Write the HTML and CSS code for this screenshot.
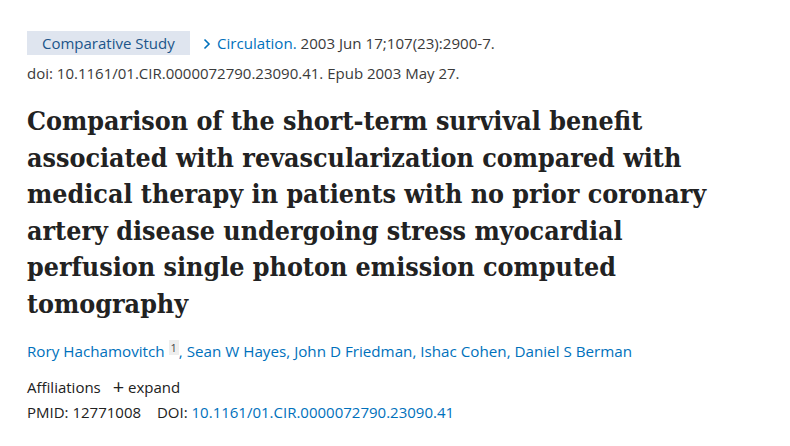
FILE: index.html
```html
<!DOCTYPE html>
<html lang="en">
<head>
<meta charset="utf-8">
<title>Comparison of the short-term survival benefit</title>
<link rel="stylesheet" href="styles.css">
</head>
<body>
<main class="article">
  <div class="meta-row">
    <span class="pub-type">Comparative Study</span>
    <span class="cit"><svg class="chev" width="10" height="12" viewBox="0 0 10 12"><path d="M2.5 1.5 L7 6 L2.5 10.5" fill="none" stroke="#0071bc" stroke-width="1.6"/></svg><a class="journal" href="#">Circulation.</a> 2003 Jun 17;107(23):2900-7.</span>
  </div>
  <div class="doi-line">doi: 10.1161/01.CIR.0000072790.23090.41. Epub 2003 May 27.</div>
  <h1 class="title">Comparison of the short-term survival benefit associated with revascularization compared with medical therapy in patients with no prior coronary artery disease undergoing stress myocardial perfusion single photon emission computed tomography</h1>
  <div class="authors">
    <a href="#">Rory Hachamovitch</a> <sup class="aff">1</sup>, <a href="#">Sean W Hayes</a>, <a href="#">John D Friedman</a>, <a href="#">Ishac Cohen</a>, <a href="#">Daniel S Berman</a>
  </div>
  <div class="affil">Affiliations <span class="expand"><span class="plus">+</span> expand</span></div>
  <div class="ids">PMID: 12771008 <span class="doi-label">DOI:</span> <a href="#">10.1161/01.CIR.0000072790.23090.41</a></div>
</main>
</body>
</html>
```
FILE: styles.css
```css
html, body { margin: 0; padding: 0; background: #fff; }
body { font-family: "Open Sans", "Noto Sans", sans-serif; color: #212121; font-size: 15px; }
a { color: #0071bc; text-decoration: none; }
.article { padding: 31px 0 0 27px; width: 720px; }
.meta-row { display: flex; align-items: center; height: 24px; }
.pub-type { background: #dfe5ef; color: #20558a; height: 24px; line-height: 24px; padding: 0 15px; width: 133px; font-size: 15px; }
.cit { margin-left: 12px; color: #3a3a3a; line-height: 24px; font-size: 15.1px; }
.chev { margin-right: 5px; vertical-align: -1px; }
.doi-line { margin-top: 7px; color: #3a3a3a; line-height: 22px; }
.title { font-family: "DejaVu Serif", serif; font-stretch: condensed; font-weight: bold; font-size: 26.6px; line-height: 36.5px; color: #222; margin: 19px 0 0 0; }
.authors { margin-top: 18px; color: #0071bc; line-height: 22px; font-size: 15.2px; }
.aff { background: #eee; color: #444; font-size: 11px; padding: 0 2px; vertical-align: 5px; line-height: 1; }
.affil { margin-top: 14px; line-height: 22px; color: #212121; }
.expand { margin-left: 8px; }
.plus { font-size: 20px; line-height: 1; vertical-align: -1px; }
.ids { margin-top: 3px; line-height: 22px; }
.doi-label { margin-left: 12px; }
```
